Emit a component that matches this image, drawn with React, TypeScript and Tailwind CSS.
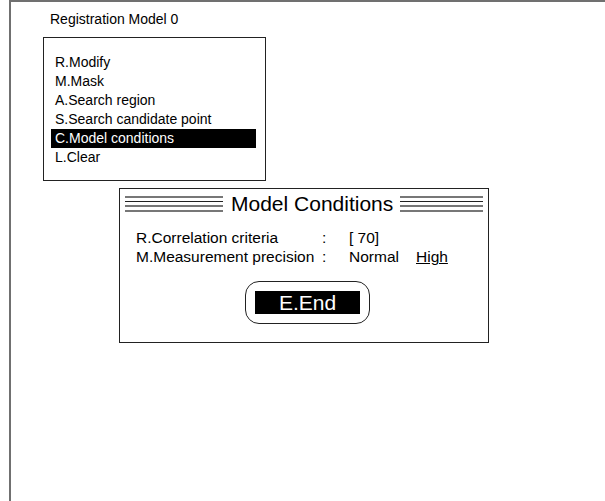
import React from "react";

const Stripes = ({ className }: { className: string }) => (
  <div className={"flex flex-col gap-[3px] " + className}>
    <div className="h-[2px] bg-[#777]" />
    <div className="h-[1px] bg-[#222]" />
    <div className="h-[2px] bg-[#777]" />
    <div className="h-[2px] bg-[#777]" />
  </div>
);

export default function App() {
  const items = [
    "R.Modify",
    "M.Mask",
    "A.Search region",
    "S.Search candidate point",
    "C.Model conditions",
    "L.Clear",
  ];
  return (
    <div
      className="w-[605px] h-[501px] bg-white overflow-hidden text-black"
      style={{ fontFamily: '"Liberation Sans", Arial, sans-serif' }}
    >
      <div className="ml-[9px] h-[520px] w-[620px] border-l-2 border-t-2 border-[#707070]">
        <div className="h-[35px] pt-[9px] pl-[39px] text-[14px] leading-[16px]">
          Registration Model 0
        </div>
        <div className="ml-[32px] w-[223px] h-[144px] border border-[#222] pt-[15px] pl-[7px]">
          {items.map((t, i) => (
            <div
              key={t}
              className={
                "w-[205px] h-[19px] pl-[4px] text-[14px] leading-[19px] " +
                (i === 4 ? "bg-black text-white" : "")
              }
            >
              {t}
            </div>
          ))}
        </div>
        <div className="mt-[7px] ml-[108px] w-[370px] h-[155px] border border-[#222]">
          <div className="flex items-center h-[29px] pl-[5px] pr-[5px]">
            <Stripes className="w-[98px]" />
            <div className="pl-[8px] pr-[7px] text-[21px] leading-[24px] whitespace-nowrap">
              Model Conditions
            </div>
            <Stripes className="flex-1" />
          </div>
          <div className="mt-[10px] pl-[16px] text-[15.5px] leading-[19px]">
            <div className="flex">
              <div className="w-[186px]">R.Correlation criteria</div>
              <div className="w-[27px]">:</div>
              <div>[ 70]</div>
            </div>
            <div className="flex">
              <div className="w-[186px]">M.Measurement precision</div>
              <div className="w-[27px]">:</div>
              <div className="w-[67px]">Normal</div>
              <div className="underline">High</div>
            </div>
          </div>
          <div className="mt-[15px] ml-[125px] w-[125px] h-[43px] rounded-[14px] border border-[#222] flex items-center justify-center">
            <div className="w-[105px] h-[23px] bg-black text-white text-[21px] leading-[23px] text-center">
              E.End
            </div>
          </div>
        </div>
      </div>
    </div>
  );
}
